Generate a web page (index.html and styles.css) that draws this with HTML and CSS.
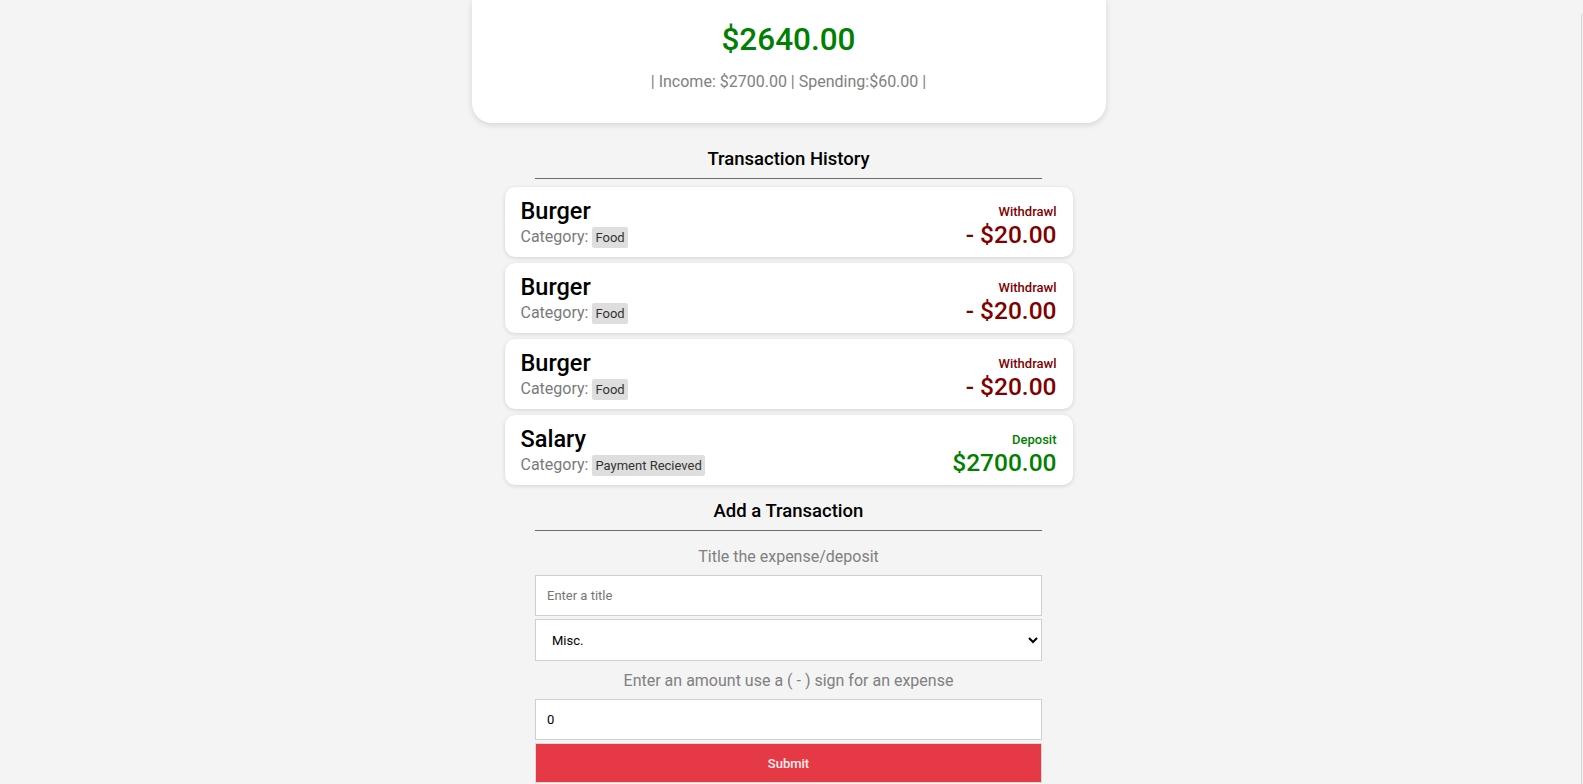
FILE: index.html
```html
<!DOCTYPE html>
<html lang="en">
<head>
<meta charset="utf-8">
<title>Expense Tracker</title>
<link rel="stylesheet" href="styles.css">
</head>
<body>
<div class="page">
  <section class="balance-card">
    <h1 class="balance">$2640.00</h1>
    <p class="summary">| Income: $2700.00 | Spending:$60.00 |</p>
  </section>

  <h3 class="section-title first">Transaction History</h3>
  <div class="rule"></div>

  <ul class="list">
    <li class="tx">
      <div class="tx-left">
        <div class="tx-title">Burger</div>
        <div class="tx-cat">Category: <span class="tag">Food</span></div>
      </div>
      <div class="tx-right withdraw">
        <div class="tx-type">Withdrawl</div>
        <div class="tx-amount">- $20.00</div>
      </div>
    </li>
    <li class="tx">
      <div class="tx-left">
        <div class="tx-title">Burger</div>
        <div class="tx-cat">Category: <span class="tag">Food</span></div>
      </div>
      <div class="tx-right withdraw">
        <div class="tx-type">Withdrawl</div>
        <div class="tx-amount">- $20.00</div>
      </div>
    </li>
    <li class="tx">
      <div class="tx-left">
        <div class="tx-title">Burger</div>
        <div class="tx-cat">Category: <span class="tag">Food</span></div>
      </div>
      <div class="tx-right withdraw">
        <div class="tx-type">Withdrawl</div>
        <div class="tx-amount">- $20.00</div>
      </div>
    </li>
    <li class="tx">
      <div class="tx-left">
        <div class="tx-title">Salary</div>
        <div class="tx-cat">Category: <span class="tag">Payment Recieved</span></div>
      </div>
      <div class="tx-right deposit">
        <div class="tx-type">Deposit</div>
        <div class="tx-amount">$2700.00</div>
      </div>
    </li>
  </ul>

  <h3 class="section-title second">Add a Transaction</h3>
  <div class="rule"></div>

  <form class="form">
    <label class="label first-label" for="title">Title the expense/deposit</label>
    <input class="field" id="title" type="text" placeholder="Enter a title">
    <select class="field select">
      <option>Misc.</option>
      <option>Food</option>
      <option>Payment Recieved</option>
    </select>
    <label class="label" for="amount">Enter an amount use a ( - ) sign for an expense</label>
    <input class="field" id="amount" type="number" value="0">
    <button class="submit" type="button">Submit</button>
  </form>
</div>
</body>
</html>
```

FILE: styles.css
```css
* {
  box-sizing: border-box;
}

html, body {
  margin: 0;
  padding: 0;
  background: #f4f4f4;
  font-family: Roboto, "Liberation Sans", Arial, sans-serif;
  overflow: hidden;
}

body::after {
  content: "";
  position: fixed;
  right: 1px;
  top: 14px;
  bottom: 0;
  width: 1px;
  background: #d6d6d6;
}

.page {
  width: 1577px;
  display: flex;
  flex-direction: column;
  align-items: center;
}

.balance-card {
  width: 634px;
  background: #fff;
  border-radius: 0 0 20px 20px;
  box-shadow: 0 2px 6px rgba(0, 0, 0, 0.13);
  padding: 21px 0 32px;
  text-align: center;
}

.balance {
  margin: 0;
  font-size: 31.5px;
  line-height: 38px;
  font-weight: 500;
  color: #008000;
}

.summary {
  margin: 13px 0 0;
  font-size: 16px;
  line-height: 19px;
  color: #808080;
}

.section-title {
  margin: 0;
  font-size: 18.5px;
  line-height: 22px;
  font-weight: 500;
  color: #000;
  text-align: center;
}

.section-title.first {
  margin-top: 25px;
}

.section-title.second {
  margin-top: 15px;
}

.rule {
  width: 507px;
  height: 1px;
  background: #6b6b6b;
  margin-top: 8px;
}

.list {
  list-style: none;
  margin: 8px 0 0;
  padding: 0;
  width: 568px;
  display: flex;
  flex-direction: column;
  gap: 6px;
}

.tx {
  height: 70px;
  background: #fff;
  border-radius: 10px;
  box-shadow: 0 1px 4px rgba(0, 0, 0, 0.14);
  padding: 0 16px;
  display: flex;
  align-items: center;
  justify-content: space-between;
}

.tx-left {
  display: flex;
  flex-direction: column;
}

.tx-title {
  font-size: 23.5px;
  line-height: 27px;
  font-weight: 500;
  color: #000;
}

.tx-cat {
  font-size: 16px;
  line-height: 19px;
  margin-top: 2px;
  color: #7a7a7a;
}

.tag {
  display: inline;
  font-size: 13px;
  color: #333;
  background: #dedede;
  padding: 3px 3px;
  border-radius: 2px;
}

.tx-right {
  display: flex;
  flex-direction: column;
  align-items: flex-end;
  padding-top: 9px;
}

.tx-type {
  font-size: 13px;
  line-height: 15px;
  font-weight: 500;
}

.tx-amount {
  font-size: 24.5px;
  line-height: 29px;
  font-weight: 500;
  margin-top: 1px;
}

.withdraw {
  color: #800000;
}

.deposit {
  color: #008000;
}

.form {
  width: 507px;
  display: flex;
  flex-direction: column;
}

.label {
  text-align: center;
  font-size: 16px;
  line-height: 19px;
  color: #808080;
  margin-top: 10px;
  margin-bottom: 9px;
}

.label.first-label {
  margin-top: 16px;
}

.field {
  width: 100%;
  height: 41px;
  border: 1px solid #cfcfcf;
  border-radius: 0;
  background: #fff;
  padding: 0 11px;
  font-family: Roboto, "Liberation Sans", Arial, sans-serif;
  font-size: 13px;
  color: #000;
  outline: none;
}

.field::placeholder {
  color: #757575;
}

.select {
  margin-top: 3px;
  height: 42px;
  padding: 0 8px 0 12px;
  appearance: auto;
}

.submit {
  margin-top: 3px;
  height: 40px;
  width: 100%;
  border: 1px solid #d8d8d8;
  background: #e63946;
  color: #fdeff0;
  font-family: Roboto, "Liberation Sans", Arial, sans-serif;
  font-size: 13px;
  font-weight: 500;
}
```
